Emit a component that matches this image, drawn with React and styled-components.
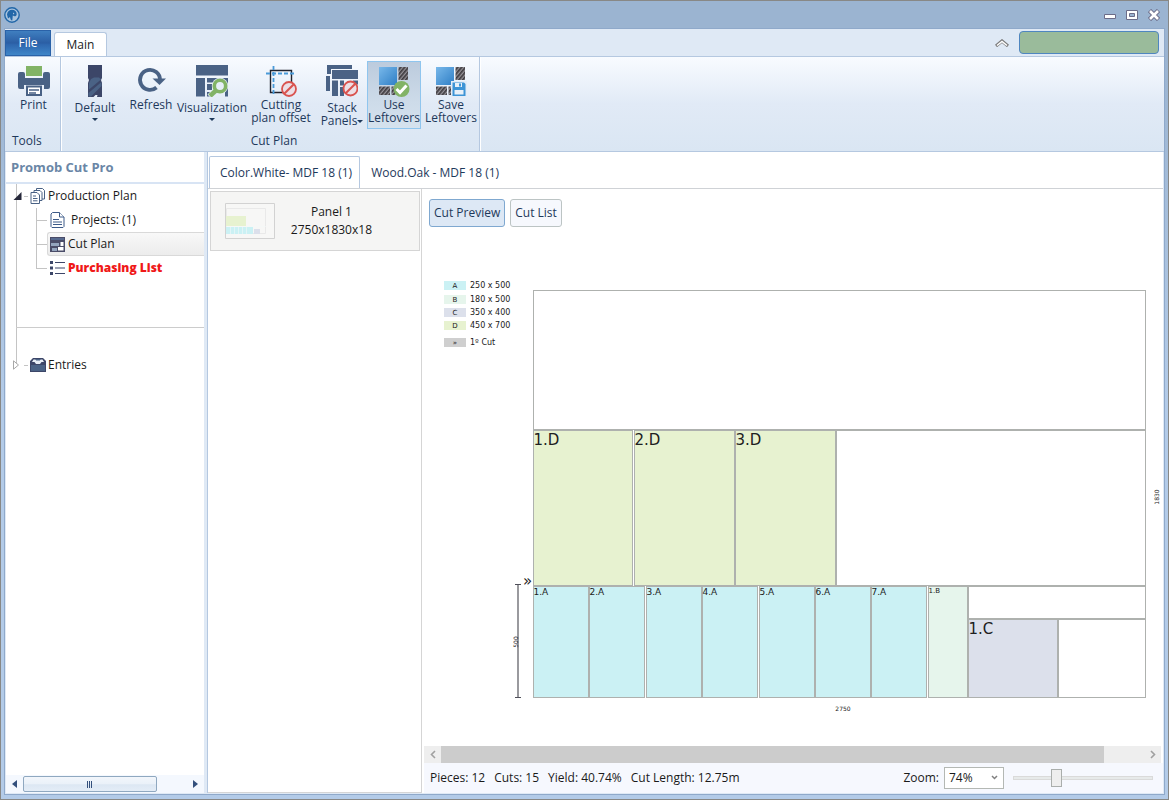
import React, { useState } from "react";
import styled, { createGlobalStyle, css, ThemeProvider } from "styled-components";

const theme = {
  font: '"Open Sans", "Noto Sans", sans-serif',
  color: {
    frame: "#9bb4d1",
    line: "#b5c8e0",
    ribbon: "#dfe9f5",
    ink: "#1e395b",
    text: "#1a1a1a",
    icon: "#4a6285",
    navy: "#3c4668",
    green: "#82b366",
    red: "#d9534f",
    blue: "#4a9ad8",
    grey: "#d5d5d5",
  },
};

const GlobalStyle = createGlobalStyle`
  * { box-sizing: border-box; }
  body {
    margin: 0;
    font-family: ${theme.font};
    font-size: 12px;
    line-height: 16px;
    color: ${theme.color.text};
  }
  button, select, input { font: inherit; color: inherit; margin: 0; }
  ul { list-style: none; margin: 0; padding: 0; }
  svg { display: block; flex: none; }
`;

const Window = styled.div`
  display: flex;
  flex-direction: column;
  min-height: 100vh;
  border: 1px solid #888886;
  padding: 0 3px 4px;
  background: linear-gradient(${({ theme }) => theme.color.frame} 60px, #b3cbe8 400px);
`;

const TitleBar = styled.header`
  display: flex;
  align-items: center;
  justify-content: space-between;
  height: 27px;
  padding: 0 4px 0 0;
`;

const WindowButtons = styled.div`
  display: flex;
  gap: 8px;
`;

const PlainButton = styled.button`
  display: flex;
  align-items: center;
  justify-content: center;
  padding: 0;
  border: 0;
  background: none;
  min-width: 14px;
`;

const Body = styled.div`
  display: flex;
  flex-direction: column;
  flex: 1;
  border: 1px solid #8fa9ca;
  background: ${({ theme }) => theme.color.ribbon};
`;

const RibbonTabs = styled.nav`
  display: flex;
  align-items: flex-end;
  height: 27px;
  gap: 3px;
`;

const FileTab = styled.button`
  width: 46px;
  height: 26px;
  padding: 0;
  border: 1px solid #2a62a8;
  color: #fff;
  background: linear-gradient(#3f7fc0, #2b5ea4 50%, #2e66ae 55%, #3f86c8);
`;

const RibbonTab = styled.button`
  width: 53px;
  height: 24px;
  padding: 0;
  border: 1px solid ${({ theme }) => theme.color.line};
  border-bottom: 0;
  border-radius: 3px 3px 0 0;
  background: #fff;
`;

const RibbonEnd = styled.div`
  display: flex;
  align-items: center;
  align-self: center;
  gap: 10px;
  margin-left: auto;
  padding-right: 5px;
`;

const AccountBox = styled.div`
  width: 140px;
  height: 23px;
  border: 1px solid #4f86c0;
  border-radius: 4px;
  background: #9abb9b;
`;

const Ribbon = styled.div`
  display: flex;
  height: 96px;
  border: 1px solid ${({ theme }) => theme.color.line};
  border-width: 1px 0;
  background: linear-gradient(#f8fbff, #e1eaf6 50%, #dae6f3);
  color: ${({ theme }) => theme.color.ink};
`;

const Group = styled.section`
  display: flex;
  flex-direction: column;
  justify-content: space-between;
  padding: 4px 0 2px ${({ $indent }) => $indent}px;
  border-right: 1px solid ${({ theme }) => theme.color.line};
  box-shadow: 1px 0 #fff;
`;

const GroupName = styled.div`
  text-align: ${({ $left }) => ($left ? "left" : "center")};
  padding-left: ${({ $left }) => ($left ? 5 : 0)}px;
`;

const Tools = styled.div`
  display: flex;
  gap: 2px;
`;

const Tool = styled.button`
  display: flex;
  flex-direction: column;
  align-items: center;
  width: ${({ $w }) => $w}px;
  height: 68px;
  padding: 3px 0 0;
  border: 1px solid transparent;
  background: none;
  line-height: 13px;
  white-space: nowrap;
  gap: ${({ $drop }) => ($drop ? 4 : 1)}px;
  ${({ $on }) =>
    $on &&
    css`
      border-color: #8fc5ee;
      background: linear-gradient(#bccbdd, #cddbe9 60%, #d5e2ee);
    `}
`;

const Arrow = styled.span`
  display: ${({ $inline }) => ($inline ? "inline-block" : "block")};
  border: 3px solid transparent;
  border-top-color: currentColor;
  border-bottom: 0;
  vertical-align: middle;
`;

const Workspace = styled.div`
  display: flex;
  flex: 1;
  padding: 0 1px 1px;
`;

const Sidebar = styled.aside`
  display: flex;
  flex-direction: column;
  flex: none;
  width: 198px;
  background: #fff;
`;

const SideTitle = styled.h1`
  margin: 0;
  height: 32px;
  padding: 0 5px;
  border-bottom: 2px solid #d8e4f4;
  font-size: 13px;
  line-height: 30px;
  color: #6a86a6;
`;

const Tree = styled.ul`
  flex: 1;
  background: linear-gradient(#c4c4c4, #c4c4c4) 10px 0 / 1px 181px no-repeat;
`;

const Row = styled.a`
  display: flex;
  align-items: center;
  height: 24px;
  gap: 2px;
  padding-left: 7px;
  color: inherit;
  text-decoration: none;
`;

const Stub = styled.span`
  flex: none;
  width: ${({ $w }) => $w}px;
  height: 1px;
  background: #c4c4c4;
`;

const Children = styled.ul`
  margin-left: 30px;
  background: linear-gradient(#c4c4c4, #c4c4c4) 0 0 / 1px 60px no-repeat;
`;

const Leaf = styled.li`
  display: flex;
  align-items: center;
  height: 24px;
`;

const LeafLink = styled.a`
  display: flex;
  align-items: center;
  flex: 1;
  height: 24px;
  gap: ${({ $gap }) => $gap || 3}px;
  padding-left: 2px;
  border: 1px solid transparent;
  color: inherit;
  text-decoration: none;
  ${({ $on }) =>
    $on &&
    css`
      border-color: #d9d9d9;
      border-right: 0;
      border-radius: 3px 0 0 3px;
      background: linear-gradient(#f8f8f8, #ececec);
    `}
  ${({ $alert }) =>
    $alert &&
    css`
      color: #f01818;
      font-weight: 800;
    `}
`;

const Divider = styled.li`
  height: 1px;
  margin: 47px 0 25px 10px;
  background: #cccccc;
`;

const SideScroll = styled.div`
  display: flex;
  align-items: center;
  height: 18px;
  padding: 0 6px;
  gap: 6px;
  background: #f4f8fe;
`;

const SideThumb = styled.div`
  display: flex;
  align-items: center;
  justify-content: center;
  width: 134px;
  height: 16px;
  margin-right: auto;
  border: 1px solid #8fa8c0;
  border-radius: 2px;
  background: linear-gradient(#f2f6fb, #eaf1f9 50%, #dce7f3 55%, #e4edf7);
`;

const Main = styled.main`
  display: flex;
  flex-direction: column;
  flex: 1;
  min-width: 0;
  margin-left: 3px;
  border-left: 1px solid ${({ theme }) => theme.color.line};
  background: #fff;
`;

const MaterialTabs = styled.div`
  display: flex;
  align-items: flex-end;
  height: 37px;
  padding-left: 1px;
  border-bottom: 1px solid #cfd2d6;
`;

const MaterialTab = styled.button`
  height: 32px;
  padding: 0 7px 0 10px;
  border: 1px solid transparent;
  border-bottom: 0;
  border-radius: 2px 2px 0 0;
  background: none;
  color: ${({ theme }) => theme.color.ink};
  ${({ $on, theme }) => $on && `border-color: ${theme.color.line}; background: #fff;`}
`;

const Split = styled.div`
  display: flex;
  flex: 1;
`;

const PanelList = styled.ul`
  flex: none;
  width: 214px;
  padding: 2px 1px 0 2px;
  border: 1px solid ${({ theme }) => theme.color.grey};
  border-width: 0 1px 1px 0;
`;

const PanelCard = styled.button`
  display: flex;
  align-items: center;
  justify-content: space-between;
  width: 210px;
  height: 60px;
  padding: 0 47px 0 14px;
  border: 1px solid ${({ theme }) => theme.color.grey};
  background: #f5f5f4;
  line-height: 18px;
  text-align: center;
`;

const Preview = styled.section`
  display: flex;
  flex-direction: column;
  flex: 1;
  min-width: 0;
`;

const ViewSwitch = styled.div`
  display: flex;
  gap: 5px;
  padding: 10px 7px 0;
`;

const ViewButton = styled.button`
  height: 28px;
  padding: 0 4px;
  border: 1px solid ${({ $on }) => ($on ? "#7fa8d0" : "#bcc4c4")};
  border-radius: 3px;
  background: ${({ $on }) => ($on ? "#dde8f5" : "#f6f8fd")};
  color: ${({ theme }) => theme.color.ink};
`;

const Canvas = styled.div`
  flex: 1;
  overflow: hidden;

  text {
    font-family: "DejaVu Sans", sans-serif;
    fill: #202020;
  }
`;

const ScrollTrack = styled.div`
  display: flex;
  align-items: center;
  height: 17px;
  margin: 0 2px;
  background: #eeeeee;
`;

const ScrollEnd = styled(PlainButton)`
  width: 17px;
  height: 17px;
`;

const ScrollThumb = styled.div`
  width: 90%;
  height: 17px;
  margin-right: auto;
  background: #cccccc;
`;

const StatusBar = styled.footer`
  display: flex;
  align-items: center;
  gap: 9px;
  height: 30px;
  margin-left: 2px;
  padding: 0 10px 0 6px;
  background: #f6f8fe;
`;

const ZoomField = styled.label`
  display: flex;
  align-items: center;
  gap: 5px;
  margin-left: auto;
`;

const ZoomSelect = styled.select`
  width: 60px;
  height: 22px;
  padding: 0 4px;
  border: 1px solid #b4b8b4;
  border-radius: 0;
  appearance: none;
  background: #fff
    url("data:image/svg+xml,%3Csvg xmlns='http://www.w3.org/2000/svg' width='7' height='5'%3E%3Cpath d='M1 1l2.5 2.5L6 1' fill='none' stroke='%23808080' stroke-width='1.5'/%3E%3C/svg%3E")
    no-repeat right 5px top 7px;
`;

const Slider = styled.input`
  width: 140px;
  height: 18px;
  appearance: none;
  background: none;

  &::-webkit-slider-runnable-track {
    height: 4px;
    border: 1px solid #dadada;
    background: #e7eaea;
  }
  &::-webkit-slider-thumb {
    appearance: none;
    width: 11px;
    height: 18px;
    margin-top: -8px;
    border: 1px solid #aaaeac;
    background: #eeeeee;
  }
`;

const c = theme.color;

const Logo = () => (
  <svg width="16" height="16" viewBox="1 1 16 16">
    <circle cx="9" cy="9" r="7.2" fill="#a9c4de" stroke="#2267a8" strokeWidth="1.4" />
    <path d="M4 8.500C4.200 5.500 6.500 3.700 9 3.700c2.800 0 4.700 1.800 4.700 4.200 0 1.400-.8 2.300-2.200 2.300L9.800 9.600 9.300 14.600C7.300 14.600 7.500 12.500 7 11L5 12.500z" fill="#2267a8" />
    <path d="M10 6.500l1.500 1-1.500 1z" fill="#a9c4de" />
  </svg>
);

const PrintIcon = () => (
  <svg width="32" height="32" viewBox="0 0 32 32">
    <path fill={c.green} d="M8 1h16v10H8z" />
    <path fill={c.icon} d="M2 7h3a2 2 0 0 1 2 2v4h18V9a2 2 0 0 1 2-2h3a2 2 0 0 1 2 2v13a2 2 0 0 1-2 2h-4v-4H6v4H2a2 2 0 0 1-2-2V9a2 2 0 0 1 2-2z" />
    <path fill="#fff" stroke={c.icon} strokeWidth="2" d="M9 21.500h14v8.500H9z" />
    <path stroke={c.icon} strokeWidth="1.600" d="M11 25h10M11 28h7" />
  </svg>
);

const BitIcon = () => (
  <svg width="32" height="32" viewBox="0 0 32 32">
    <path fill={c.navy} d="M9 0h14v13l-1 2 1 3v14H9V18l1-3-1-2z" />
    <path fill={c.icon} d="M12 14l3-1.500h5l2 2-12 10V18zM22.500 17v4L12 31.500H9.500V28z" />
    <path fill="#e6eef8" d="M23.500 24v9H13.500l3-3h4z" />
    <path fill={c.navy} d="M19 28l4-3.500V32h-5z" />
  </svg>
);

const RefreshIcon = () => (
  <svg width="32" height="32" viewBox="0 2 32 32">
    <path fill="none" stroke={c.icon} strokeWidth="3.800" d="M21.500 24.500A10 10 0 1 1 25 17" />
    <path fill={c.icon} d="M17.500 15.500H31L24.500 22z" />
  </svg>
);

const VisualizationIcon = () => (
  <svg width="34" height="32" viewBox="0 0 34 32">
    <path fill={c.icon} d="M1 0h32v10.500H1zM1 13h9v18.500H1zM12 13h21v4.500H12zM12 19h5v6h-5zM12 27h4v4.500h-4zM30 13h3v18.500h-3z" />
    <circle cx="25" cy="21" r="8.200" fill="#e6eef8" />
    <path stroke="#e6eef8" strokeWidth="7" d="M21 26l-6 6" />
    <circle cx="25" cy="21" r="5.700" fill="#e6eef8" stroke={c.green} strokeWidth="3.600" />
    <path stroke={c.green} strokeWidth="4.500" d="M21 25.500L15 31" />
  </svg>
);

const Forbidden = ({ x, y }) => (
  <g transform={`translate(${x} ${y})`}>
    <circle r="7" fill="#ecdfe6" stroke={c.red} strokeWidth="1.800" />
    <path stroke={c.red} strokeWidth="2" d="M-4.800 4.800L4.800-4.800" />
  </g>
);

const OffsetIcon = () => (
  <svg width="32" height="32" viewBox="0 0 32 32">
    <path fill="none" stroke="#20222c" strokeWidth="1.400" d="M5.500 5.500h21v22h-21z" />
    <path stroke={c.blue} strokeWidth="1.800" strokeDasharray="4 2" d="M1 8.500h30M8.500 1v30" />
    <Forbidden x={24} y={24} />
  </svg>
);

const StackIcon = () => (
  <svg width="32" height="32" viewBox="0 0 32 32">
    <path fill={c.icon} d="M1 0h25v4H5v5H1zM0 11h4v15H0zM6 5h26v9H6zM6 15.500h6v15.500H6zM14 15.500h4v5h-4zM14 22h4v9h-4zM27 15.500h5v4h-5z" />
    <Forbidden x={24.5} y={23.5} />
  </svg>
);

const Leftovers = ({ children }) => (
  <svg width="32" height="32" viewBox="0 0 32 32">
    <defs>
      <linearGradient id="sheet" x1="0" y1="0" x2="1" y2="1">
        <stop offset="0" stopColor="#78b8ea" />
        <stop offset="1" stopColor="#2f7fc6" />
      </linearGradient>
      <pattern id="hatch" width="3" height="3" patternUnits="userSpaceOnUse" patternTransform="rotate(40)">
        <path fill="#97949a" d="M0 0h3v3H0z" />
        <path fill="#3e3b3f" d="M0 0h1.700v3H0z" />
      </pattern>
    </defs>
    <path fill="url(#sheet)" d="M1 2h18v18H1z" />
    <path fill="url(#hatch)" d="M20.500 2H30v13h-9.500zM1 21.500h11V30H1zM13.500 21.500h4V30h-4z" />
    {children}
  </svg>
);

const UseIcon = () => (
  <Leftovers>
    <circle cx="23.500" cy="24" r="8" fill={c.green} />
    <path fill="none" stroke="#fff" strokeWidth="3" d="M18.500 24l3.500 3.500 6.500-7" />
  </Leftovers>
);

const SaveIcon = () => (
  <Leftovers>
    <path fill="#e3ecf7" d="M16 16h16v16H16z" />
    <path fill="#3d94d6" d="M17.500 17.500H29l1.500 1.500v12h-13z" />
    <path fill="#e8f0f8" d="M20 18h7v4h-7zM19.500 25h9v4.500h-9z" />
    <path fill="#3d94d6" d="M24 18.500h2v3h-2z" />
  </Leftovers>
);

const PagesIcon = () => (
  <svg width="16" height="16" viewBox="0 0 16 16" fill="#fff" stroke="#4a6285">
    <path d="M6.500 3V.5h6l2 2V11H12" />
    <path d="M4 4.500V2.500h6l2 2v8h-2" />
    <path d="M1 4.500h6l2.500 2.500v8.500H1z" />
    <path d="M3 8h3M3 10.500h4.500M3 12.800h4.500" />
  </svg>
);

const PageIcon = () => (
  <svg width="15" height="16" viewBox="0 0 15 16" fill="#fff" stroke="#3c5a88">
    <path d="M2.500.5h7l4.500 4.500v9.500l-1 1H2l-1-1V2z" />
    <path d="M9.500.5v4.500H14M3 7.500h6M3 10h9M3 12.500h9" />
  </svg>
);

const PlanIcon = () => (
  <svg width="15" height="15" viewBox="0 0 15 15">
    <path fill="#4a4c68" d="M0 0h15v15H0z" />
    <path fill="#56698e" d="M1 1h13v2H1z" />
    <path fill="#93a4bd" d="M1 6h8v3H1zM2 11h5v3H2z" />
    <path fill="#fff" d="M10.500 5h3v4h-3zM8 10h5.500v3.500H8z" />
  </svg>
);

const ListIcon = () => (
  <svg width="15" height="14" viewBox="0 0 15 14" fill="#3c4668">
    <path d="M0 0h3v3H0zM0 5.500h3v3H0zM0 11h3v3H0zM5 1h10v1H5zM5 6.500h10v1H5zM5 12h10v1H5z" />
  </svg>
);

const DrawerIcon = () => (
  <svg width="16" height="14" viewBox="0 0 16 14">
    <path fill="#3c4668" d="M3 0h10l3 3v11H0V3z" />
    <path fill="#e8eef6" d="M3.500 1.500h9L14 4h-2.500L10 6H6L4.500 4H2z" />
    <path fill="#4a6285" d="M1 7h14v6H1zM5 1l2 2 1-1 1 1 2-2z" />
  </svg>
);

const Chevron = ({ right }) => (
  <svg width="6" height="9" viewBox="0 0 6 9">
    <path fill="none" stroke="#a0a0a0" strokeWidth="1.600" d={right ? "M1 1l3.500 3.500L1 8" : "M5 1L1.500 4.500 5 8"} />
  </svg>
);

const Triangle = ({ right }) => (
  <svg width="5" height="8" viewBox="0 0 5 8">
    <path fill="#34507c" d={right ? "M0 0l5 4-5 4z" : "M5 0v8L0 4z"} />
  </svg>
);

const legend = [
  { key: "A", size: "250 x 500", fill: "#cbf1f4", y: 52 },
  { key: "B", size: "180 x 500", fill: "#e6f5ec", y: 66 },
  { key: "C", size: "350 x 400", fill: "#dce0eb", y: 79 },
  { key: "D", size: "450 x 700", fill: "#e7f2d0", y: 92 },
  { key: "»", size: "1º Cut", fill: "#cfcfcf", y: 109 },
];

const colors = { A: "#cbf1f4", B: "#e6f5ec", C: "#dce0eb", D: "#e7f2d0" };

// positions are relative to the top left corner of the board
const pieces = [
  { name: "1.D", x: 0, y: 140, w: 99, h: 155, font: 15 },
  { name: "2.D", x: 101, y: 140, w: 100, h: 155, font: 15 },
  { name: "3.D", x: 202, y: 140, w: 100, h: 155, font: 15 },
  ...[0, 56, 113, 169, 226, 282, 338].map((x, i) => ({ name: `${i + 1}.A`, x, y: 296, w: 55, h: 111, font: 9 })),
  { name: "1.B", x: 395, y: 296, w: 39, h: 111, font: 7 },
  { name: "1.C", x: 435, y: 329, w: 89, h: 78, font: 15 },
];

const offcuts = [
  { x: 0, y: 0, w: 612, h: 139 },
  { x: 303, y: 140, w: 309, h: 155 },
  { x: 435, y: 296, w: 177, h: 32 },
  { x: 525, y: 329, w: 87, h: 78 },
];

const CutDiagram = () => (
  <svg width="741" height="500" viewBox="0 0 741 500">
    {legend.map((l) => (
      <g key={l.key}>
        <rect x="22" y={l.y + 2} width="22" height="9" fill={l.fill} />
        <text x="33" y={l.y + 9} fontSize="7" textAnchor="middle">{l.key}</text>
        <text x="48" y={l.y + 9} fontSize="8">{l.size}</text>
      </g>
    ))}
    <g transform="translate(111.5 63.5)" stroke="#aeb1ae">
      {offcuts.map((o) => (
        <rect key={`${o.x}-${o.y}`} x={o.x} y={o.y} width={o.w} height={o.h} fill="#fff" />
      ))}
      {pieces.map((p) => (
        <g key={p.name}>
          <rect x={p.x} y={p.y} width={p.w} height={p.h} fill={colors[p.name[2]]} />
          <text x={p.x} y={p.y + p.font - 1} fontSize={p.font} stroke="none">{p.name}</text>
        </g>
      ))}
    </g>
    <path stroke="#9a9a9e" strokeWidth="2" d="M96 358v112" />
    <path stroke="#50505a" d="M93 357.500h6M93 470.500h6" />
    <text x="101" y="359" fontSize="15">»</text>
    <text x="421" y="484" fontSize="6" textAnchor="middle">2750</text>
    <text transform="translate(96 415) rotate(-90)" fontSize="6" textAnchor="middle">500</text>
    <text transform="translate(737 270) rotate(-90)" fontSize="6" textAnchor="middle">1830</text>
  </svg>
);

const Thumbnail = () => (
  <svg width="50" height="36" viewBox="0 0 50 36">
    <path fill="#f7f7f6" stroke="#d2d2d2" d="M.5.5h49v35H.5z" />
    <path fill="none" stroke="#e9e9e9" d="M1.500 5.500h39v25h-39z" />
    <path fill="#e7f2d0" d="M1 13h20v10H1z" />
    <path fill="#cbf1f4" d="M1 24h27v7H1z" />
    <path fill="#dce0eb" d="M29 26h6v5h-6z" />
    <path stroke="#f3f8f8" strokeWidth=".6" d="M1 23.500h40M5.500 24v7M9.500 24v7M13.500 24v7M17.500 24v7M21.500 24v7" />
  </svg>
);

const tools = [
  { w: 52, icon: BitIcon, lines: ["Default"], drop: "below" },
  { w: 56, icon: RefreshIcon, lines: ["Refresh"] },
  { w: 62, icon: VisualizationIcon, lines: ["Visualization"], drop: "below" },
  { w: 72, icon: OffsetIcon, lines: ["Cutting", "plan offset"] },
  { w: 46, icon: StackIcon, lines: ["Stack", "Panels"], drop: "inline" },
  { w: 54, icon: UseIcon, lines: ["Use", "Leftovers"], on: true },
  { w: 56, icon: SaveIcon, lines: ["Save", "Leftovers"] },
];

export default () => {
  const [zoom, setZoom] = useState(29);

  return (
    <ThemeProvider theme={theme}>
      <GlobalStyle />
      <Window>
        <TitleBar>
          <Logo />
          <WindowButtons>
            <PlainButton aria-label="Minimize">
              <svg width="12" height="12" viewBox="0 0 12 12">
                <path fill="#fff" stroke="#6c6c88" d="M.5 5.500h11v4H.5z" />
              </svg>
            </PlainButton>
            <PlainButton aria-label="Maximize">
              <svg width="12" height="12" viewBox="0 0 12 12">
                <path fill="#fff" stroke="#6c6c88" d="M.5 1.500h11v9H.5z" />
                <path fill="#9bb4d1" stroke="#6c6c88" d="M3.500 4.500h5v3h-5z" />
              </svg>
            </PlainButton>
            <PlainButton aria-label="Close">
              <svg width="12" height="12" viewBox="0 0 12 12">
                <path stroke="#6c6c88" strokeWidth="4.500" d="M1.500 1.500l9 9M10.500 1.500l-9 9" />
                <path stroke="#fff" strokeWidth="2.600" d="M2 2l8 8M10 2l-8 8" />
              </svg>
            </PlainButton>
          </WindowButtons>
        </TitleBar>

        <Body>
          <RibbonTabs>
            <FileTab>File</FileTab>
            <RibbonTab>Main</RibbonTab>
            <RibbonEnd>
              <PlainButton aria-label="Collapse ribbon">
                <svg width="14" height="8" viewBox="0 0 14 8">
                  <path fill="none" stroke="#7a7a7a" strokeWidth="3.200" d="M1 7l6-5 6 5" />
                  <path fill="none" stroke="#fff" strokeWidth="1.600" d="M2 6.500l5-4 5 4" />
                </svg>
              </PlainButton>
              <AccountBox />
            </RibbonEnd>
          </RibbonTabs>

          <Ribbon>
            <Group $indent={2}>
              <Tools>
                <Tool $w={53}>
                  <PrintIcon />
                  <span>Print</span>
                </Tool>
              </Tools>
              <GroupName $left>Tools</GroupName>
            </Group>
            <Group $indent={8}>
              <Tools>
                {tools.map(({ w, icon: Icon, lines, drop, on }) => (
                  <Tool key={lines.join(" ")} $w={w} $drop={drop} $on={on}>
                    <Icon />
                    <span>
                      {lines[0]}
                      {lines[1] && <br />}
                      {lines[1]}
                      {drop === "inline" && <Arrow $inline />}
                    </span>
                    {drop === "below" && <Arrow />}
                  </Tool>
                ))}
              </Tools>
              <GroupName>Cut Plan</GroupName>
            </Group>
          </Ribbon>

          <Workspace>
            <Sidebar>
              <SideTitle>Promob Cut Pro</SideTitle>
              <Tree>
                <li>
                  <Row href="#production">
                    <svg width="9" height="8" viewBox="0 0 9 8">
                      <path fill="#26283a" d="M8.500 0v8H.5z" />
                    </svg>
                    <Stub $w={4} />
                    <PagesIcon />
                    Production Plan
                  </Row>
                  <Children>
                    <Leaf>
                      <Stub $w={11} />
                      <LeafLink href="#projects" $gap={6}>
                        <PageIcon />
                        Projects: (1)
                      </LeafLink>
                    </Leaf>
                    <Leaf>
                      <Stub $w={11} />
                      <LeafLink href="#cutplan" $on>
                        <PlanIcon />
                        Cut Plan
                      </LeafLink>
                    </Leaf>
                    <Leaf>
                      <Stub $w={11} />
                      <LeafLink href="#purchasing" $alert>
                        <ListIcon />
                        Purchasing List
                      </LeafLink>
                    </Leaf>
                  </Children>
                </li>
                <Divider role="separator" />
                <li>
                  <Row href="#entries">
                    <svg width="9" height="10" viewBox="0 0 9 10">
                      <path fill="#fff" stroke="#a8a8a8" d="M.5.8L5.500 5l-5 4.200z" />
                    </svg>
                    <Stub $w={4} />
                    <DrawerIcon />
                    Entries
                  </Row>
                </li>
              </Tree>
              <SideScroll>
                <Triangle />
                <SideThumb>
                  <svg width="6" height="7" viewBox="0 0 6 7">
                    <path stroke="#34507c" d="M.5 0v7M2.500 0v7M4.500 0v7" />
                  </svg>
                </SideThumb>
                <Triangle right />
              </SideScroll>
            </Sidebar>

            <Main>
              <MaterialTabs role="tablist">
                <MaterialTab role="tab" aria-selected="true" $on>Color.White- MDF 18 (1)</MaterialTab>
                <MaterialTab role="tab" aria-selected="false">Wood.Oak - MDF 18 (1)</MaterialTab>
              </MaterialTabs>
              <Split>
                <PanelList>
                  <li>
                    <PanelCard>
                      <Thumbnail />
                      <span>
                        Panel 1<br />
                        2750x1830x18
                      </span>
                    </PanelCard>
                  </li>
                </PanelList>
                <Preview>
                  <ViewSwitch>
                    <ViewButton $on>Cut Preview</ViewButton>
                    <ViewButton>Cut List</ViewButton>
                  </ViewSwitch>
                  <Canvas>
                    <CutDiagram />
                  </Canvas>
                  <ScrollTrack>
                    <ScrollEnd aria-label="Scroll left"><Chevron /></ScrollEnd>
                    <ScrollThumb />
                    <ScrollEnd aria-label="Scroll right"><Chevron right /></ScrollEnd>
                  </ScrollTrack>
                  <StatusBar>
                    <span>Pieces: 12</span>
                    <span>Cuts: 15</span>
                    <span>Yield: 40.74%</span>
                    <span>Cut Length: 12.75m</span>
                    <ZoomField>
                      Zoom:
                      <ZoomSelect defaultValue="74%">
                        <option>50%</option>
                        <option>74%</option>
                        <option>100%</option>
                      </ZoomSelect>
                    </ZoomField>
                    <Slider
                      type="range"
                      aria-label="Zoom level"
                      value={zoom}
                      onChange={(e) => setZoom(e.target.value)}
                    />
                  </StatusBar>
                </Preview>
              </Split>
            </Main>
          </Workspace>
        </Body>
      </Window>
    </ThemeProvider>
  );
};
